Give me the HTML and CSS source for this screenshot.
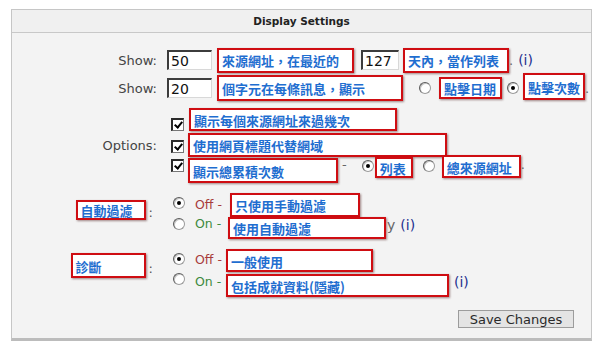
FILE: index.html
```html
<!DOCTYPE html>
<html lang="zh-Hant">

<head>
    <meta charset="UTF-8">
    <meta name="viewport" content="width=device-width, initial-scale=1.0">
    <title>Display Settings</title>
    <link rel="stylesheet" href="styles.css">
</head>

<body>
    <main class="panel">
        <div class="panel-title">Display Settings</div>
        <form class="settings">
            <div class="setting show-referrers">
                <div class="setting-label">Show:</div>
                <div class="setting-field">
                    <div class="line">
                        <input type="text" class="num num-short" value="50">
                        <span class="note note-referrers">來源網址，在最近的</span>
                        <input type="text" class="num num-days" value="127">
                        <span class="note note-days">天內，當作列表</span>
                        <span class="dot">.</span>
                        <span class="info info-days">(i)</span>
                    </div>
                </div>
            </div>

            <div class="setting show-chars">
                <div class="setting-label">Show:</div>
                <div class="setting-field">
                    <div class="line">
                        <input type="text" class="num num-short" value="20">
                        <span class="note note-chars">個字元在每條訊息，顯示</span>
                        <span class="radio radio-date"></span>
                        <span class="note note-date">點擊日期</span>
                        <span class="radio on radio-hits"></span>
                        <span class="note note-hits">點擊次數</span>
                        <span class="dot">.</span>
                    </div>
                </div>
            </div>

            <div class="setting options">
                <div class="setting-label">Options:</div>
                <div class="setting-field opts">
                    <div class="line opt opt-a">
                        <span class="check"></span>
                        <span class="note note-count">顯示每個來源網址來過幾次</span>
                    </div>
                    <div class="line opt opt-b">
                        <span class="check"></span>
                        <span class="note note-title">使用網頁標題代替網域</span>
                    </div>
                    <div class="line opt opt-c">
                        <span class="check"></span>
                        <span class="note note-total">顯示總累積次數</span>
                        <span class="dash">-</span>
                        <span class="radio on radio-list"></span>
                        <span class="note note-list">列表</span>
                        <span class="radio radio-sources"></span>
                        <span class="note note-sources">總來源網址</span>
                        <span class="dot">.</span>
                    </div>
                </div>
            </div>

            <div class="setting autofilter">
                <div class="setting-label top">
                    <span class="note note-filter-label">自動過濾</span>
                    <span class="colon">:</span>
                </div>
                <div class="setting-field choices">
                    <div class="line choice choice-off">
                        <span class="radio on"></span>
                        <span class="state off">Off -</span>
                        <span class="note note-manual">只使用手動過濾</span>
                    </div>
                    <div class="line choice choice-on">
                        <span class="radio"></span>
                        <span class="state on">On -</span>
                        <span class="note note-auto">使用自動過濾</span>
                        <span class="tail">y</span>
                        <span class="info">(i)</span>
                    </div>
                </div>
            </div>

            <div class="setting diagnostics">
                <div class="setting-label top">
                    <span class="note note-diag-label">診斷</span>
                    <span class="colon">:</span>
                </div>
                <div class="setting-field choices">
                    <div class="line choice choice-off">
                        <span class="radio on"></span>
                        <span class="state off">Off -</span>
                        <span class="note note-normal">一般使用</span>
                    </div>
                    <div class="line choice choice-on">
                        <span class="radio"></span>
                        <span class="state on">On -</span>
                        <span class="note note-extra">包括成就資料(隱藏)</span>
                        <span class="info">(i)</span>
                    </div>
                </div>
            </div>

            <div class="actions">
                <button type="button" class="save-btn">Save Changes</button>
            </div>
        </form>
    </main>
</body>

</html>
```

FILE: styles.css
```css
* {
    padding: 0px;
    margin: 0px;
    box-sizing: border-box;
}

body {
    background-color: #ffffff;
    font-family: "DejaVu Sans", Verdana, sans-serif;
    font-size: 13px;
    color: #444444;
}

.panel {
    width: 581px;
    margin: 9px 0 0 11px;
    border: 1px solid #c6c6c6;
    border-bottom: 3px solid #bcbcbc;
    background-color: #f3f3f3;
}

.panel-title {
    height: 23px;
    line-height: 22px;
    border-bottom: 1px solid #c8c8c8;
    background-color: #f0f0f0;
    text-align: center;
    font-size: 10.5px;
    font-weight: bold;
    color: #222222;
}

.settings {
    padding: 14px 0 10px 0;
}

.setting {
    display: grid;
    grid-template-columns: 145px 1fr;
    column-gap: 10px;
}

.setting-label {
    display: flex;
    align-items: center;
    justify-content: flex-end;
    white-space: nowrap;
}

.setting-label.top {
    align-items: flex-start;
}

.line {
    display: flex;
    align-items: center;
    white-space: nowrap;
}

/* rows */
.show-referrers .line {
    height: 26px;
}

.show-chars .line {
    height: 30px;
}

.options {
    margin-top: 4px;
}

.opts {
    padding-left: 4px;
}

.opt {
    align-items: flex-start;
}

.opt-a {
    height: 25px;
}

.opt-b {
    height: 25px;
}

.opt-c {
    height: 27px;
}

.opt-a .check {
    margin-top: 11px;
}

.opt-b .check {
    margin-top: 8px;
}

.opt-c .check {
    margin-top: 2px;
}

.opt .note {
    margin-top: 1px;
}

.autofilter,
.diagnostics {
    margin-top: 9px;
}

.choices {
    padding-left: 6px;
}

.choice {
    align-items: flex-start;
}

.autofilter .choice-off {
    height: 24px;
}

.autofilter .choice-on {
    height: 23px;
}

.diagnostics .choice-off {
    height: 25px;
}

.diagnostics .choice-on {
    height: 24px;
}

.autofilter .choice-off .radio {
    margin-top: 4px;
}

.autofilter .choice-off .state {
    margin-top: 4px;
}

.autofilter .choice-on .radio {
    margin-top: 1px;
}

.autofilter .choice-on .state {
    margin-top: -1px;
}

.diagnostics .choice-off .radio {
    margin-top: 4px;
}

.diagnostics .choice-off .state {
    margin-top: 3px;
}

.diagnostics .choice-on .radio {
    margin-top: -1px;
}

.autofilter .state {
    width: 45px;
}

.diagnostics .state {
    width: 41px;
}

.autofilter .choice-on .note {
    margin-left: -2px;
}

/* form bits */
.num {
    height: 20px;
    padding: 1px 0 0 2px;
    border-top: 2px solid #3c3c3c;
    border-left: 2px solid #3c3c3c;
    border-right: 1px solid #d8d8d8;
    border-bottom: 1px solid #d8d8d8;
    background-color: #ffffff;
    font-family: "DejaVu Sans", Verdana, sans-serif;
    font-size: 14px;
    color: #111111;
    outline: none;
}

.num-short {
    width: 45px;
}

.num-days {
    width: 38px;
    margin-left: 7px;
}

.radio {
    position: relative;
    flex: none;
    width: 12px;
    height: 12px;
    border-radius: 50%;
    border: 1px solid #9a9a9a;
    border-top-color: #5a5a5a;
    border-left-color: #5a5a5a;
    background-color: #ffffff;
    box-shadow: inset 1px 1px 0 #c4c4c4;
}

.radio.on::after {
    content: "";
    position: absolute;
    left: 3px;
    top: 3px;
    width: 4px;
    height: 4px;
    border-radius: 50%;
    background-color: #000000;
}

.check {
    position: relative;
    flex: none;
    width: 13px;
    height: 13px;
    border-top: 2px solid #2a2a2a;
    border-left: 2px solid #2a2a2a;
    border-right: 1px solid #777777;
    border-bottom: 1px solid #777777;
    background-color: #ffffff;
}

.check::after {
    content: "";
    position: absolute;
    left: 3px;
    top: 0px;
    width: 3px;
    height: 6px;
    border-right: 2px solid #000000;
    border-bottom: 2px solid #000000;
    transform: rotate(40deg);
}

.state {
    flex: none;
    line-height: 16px;
    padding-left: 10px;
    font-size: 12.5px;
    color: #555555;
}

.state.off {
    color: #a83c3c;
}

.state.on {
    color: #3d8a3d;
}

.dot,
.dash,
.tail {
    color: #666666;
}

.dash {
    margin-left: 4px;
    line-height: 16px;
}

.tail {
    margin-left: 1px;
    font-size: 14px;
}

.info {
    margin-left: 5px;
    font-size: 14px;
    color: #1d2f8f;
}

.info-days {
    margin-left: 5px;
}

.colon {
    margin: 0 4px 0 3px;
    line-height: 40px;
    color: #555555;
}

/* red callouts */
.note {
    display: flex;
    align-items: center;
    flex: none;
    height: 24px;
    padding: 1px 0 0 3px;
    border: 2px solid #cf0d12;
    box-shadow: 1px 1px 2px rgba(60, 0, 0, 0.45);
    background-color: #ffffff;
    font-family: "Noto Sans CJK TC", "Noto Sans CJK SC", sans-serif;
    font-size: 13px;
    font-weight: bold;
    color: #1f6ed0;
}

.note-referrers {
    width: 137px;
    height: 25px;
    margin-left: 5px;
}

.note-days {
    width: 106px;
    height: 25px;
    margin-left: 4px;
}

.note-chars {
    width: 186px;
    height: 26px;
    margin-left: 5px;
}

.radio-date {
    margin-left: 16px;
}

.note-date {
    width: 63px;
    height: 22px;
    margin-left: 8px;
}

.radio-hits {
    margin-left: 5px;
}

.note-hits {
    width: 62px;
    height: 27px;
    margin: -3px 0 0 4px;
}

.note-count {
    width: 208px;
    height: 23px;
    margin-left: 5px;
}

.note-title {
    width: 259px;
    margin-left: 4px;
}

.note-total {
    width: 150px;
    height: 25px;
    margin-left: 4px;
}

.radio-list {
    margin: 3px 0 0 15px;
}

.opt .note-list {
    width: 38px;
    height: 21px;
    margin: 0 0 0 1px;
}

.radio-sources {
    margin: 3px 0 0 10px;
}

.opt .note-sources {
    width: 79px;
    height: 23px;
    margin: -2px 0 0 7px;
}

.note-filter-label {
    width: 70px;
    height: 20px;
    margin-top: 7px;
}

.note-diag-label {
    width: 75px;
    height: 25px;
    margin-top: 4px;
}

.note-manual {
    width: 130px;
}

.note-auto {
    width: 158px;
    height: 22px;
}

.note-normal {
    width: 147px;
    height: 23px;
}

.note-extra {
    width: 223px;
    height: 23px;
}

.actions {
    display: flex;
    justify-content: flex-end;
    margin-top: 12px;
    padding-right: 17px;
}

.save-btn {
    width: 116px;
    height: 18px;
    border: 1px solid #9c9c9c;
    background-color: #e4e4e4;
    font-family: "DejaVu Sans", Verdana, sans-serif;
    font-size: 13px;
    line-height: 15px;
    color: #2a2a2a;
}
```
